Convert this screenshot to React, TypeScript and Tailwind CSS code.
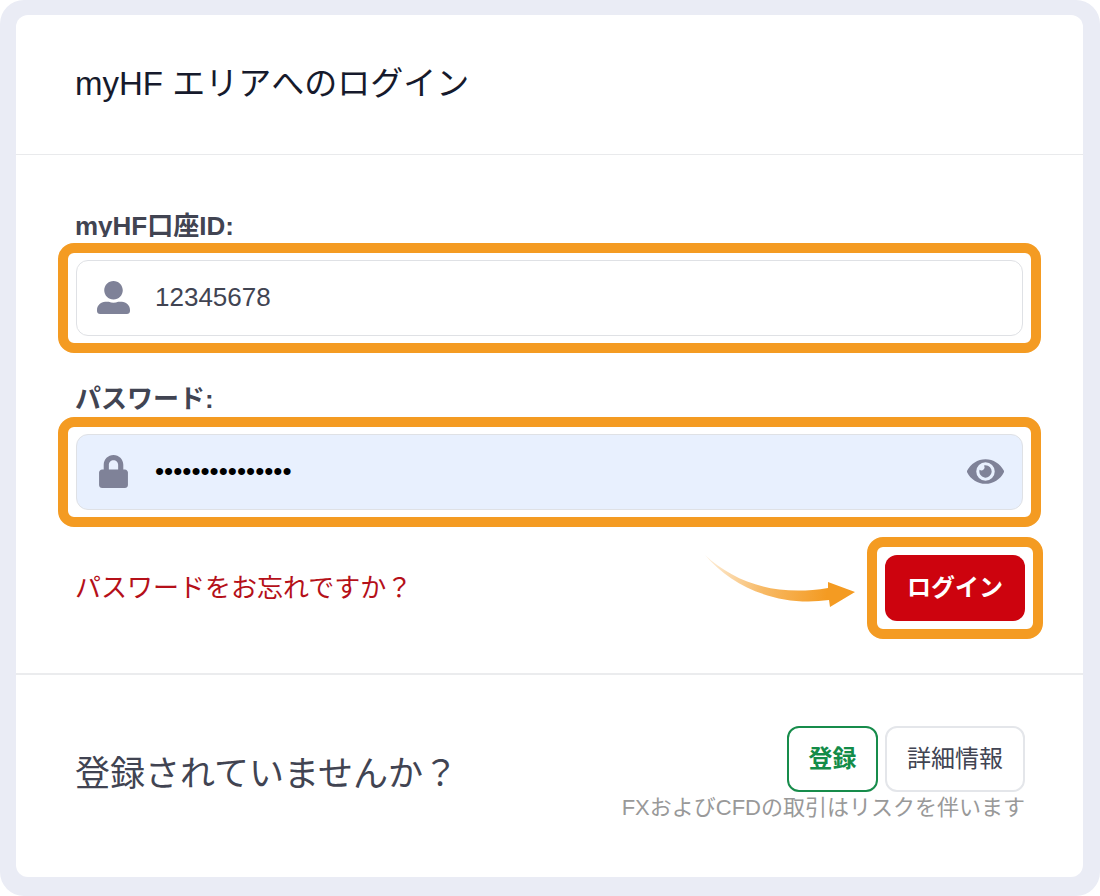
import { useState } from 'react';
import type { ReactNode } from 'react';
import { FaEye, FaLock, FaUserAlt } from 'react-icons/fa';

const fieldClass =
  'h-[76px] w-full rounded-xl border border-[#dfe1e5] pb-0.5 pl-[78px] text-[26px] outline-none';

function Highlight({ className = '', children }: { className?: string; children: ReactNode }) {
  return (
    <div className={`rounded-2xl border-[10px] border-[#f49b22] ${className}`}>{children}</div>
  );
}

function Arrow() {
  return (
    <svg
      className="mt-[18px] mr-3 h-[52px] w-[150px] shrink-0 self-start"
      viewBox="0 0 150 52"
      aria-hidden="true"
    >
      <defs>
        <linearGradient id="arrow-fade" gradientUnits="userSpaceOnUse" x1="0" y1="0" x2="125" y2="20">
          <stop offset="0" stopColor="#f49b22" stopOpacity="0.15" />
          <stop offset="0.5" stopColor="#f49b22" stopOpacity="0.7" />
          <stop offset="1" stopColor="#f49b22" />
        </linearGradient>
      </defs>
      <path
        d="M0 0C29 27 70 42 123 33L123 27L150 37L125 52L124 45C74 52 28 33 0 0Z"
        fill="url(#arrow-fade)"
      />
    </svg>
  );
}

export default function App() {
  const [accountId, setAccountId] = useState('12345678');
  const [password, setPassword] = useState('myhfpassword123');
  const [showPassword, setShowPassword] = useState(false);

  return (
    <div className="bg-white font-['Liberation_Sans','Noto_Sans_CJK_JP',sans-serif] text-[#414452]">
      <div className="flex min-h-screen flex-col rounded-3xl bg-[#eaecf5] pt-[15px] pr-[17px] pb-[19px] pl-4">
        <main className="flex grow flex-col rounded-xl bg-white">
          <header className="border-b border-[#e9eaec] px-[59px] pt-[45px] pb-[46px]">
            <h1 className="text-[33px] leading-[48px] text-[#161a2c]">myHF エリアへのログイン</h1>
          </header>

          <form
            className="flex flex-col px-[59px] pt-[55px] pb-[34px]"
            onSubmit={(e) => e.preventDefault()}
          >
            <label
              htmlFor="accountId"
              className="mb-1.5 h-[27px] overflow-hidden text-[26px] leading-[32px] font-bold"
            >
              myHF口座ID:
            </label>
            <Highlight className="-mx-[17px] px-2 py-[7px]">
              <div className="relative">
                <FaUserAlt className="absolute top-[21px] left-[21px] h-[33px] w-[33px] text-[#7f8298]" />
                <input
                  id="accountId"
                  type="text"
                  value={accountId}
                  onChange={(e) => setAccountId(e.target.value)}
                  className={`${fieldClass} bg-white pr-5`}
                />
              </div>
            </Highlight>

            <label htmlFor="password" className="mt-[30px] mb-0.5 text-[26px] leading-[32px] font-bold">
              パスワード:
            </label>
            <Highlight className="-mx-[17px] px-2 py-[7px]">
              <div className="relative">
                <FaLock className="absolute top-[21px] left-[21px] h-[33px] w-[33px] text-[#7f8298]" />
                <input
                  id="password"
                  type={showPassword ? 'text' : 'password'}
                  value={password}
                  onChange={(e) => setPassword(e.target.value)}
                  className={`${fieldClass} bg-[#e8f0fe] pr-[72px] text-black`}
                />
                <button
                  type="button"
                  aria-label="パスワードを表示"
                  onClick={() => setShowPassword(!showPassword)}
                  className="absolute top-[21px] right-[19px] text-[#7f8298]"
                >
                  <FaEye className="h-[33px] w-[37px]" />
                </button>
              </div>
            </Highlight>

            <div className="-mr-[19px] mt-2.5 flex items-center justify-between">
              <a href="#forgot" className="text-[26px] leading-[32px] text-[#b51019]">
                パスワードをお忘れですか？
              </a>
              <div className="flex items-center">
                <Arrow />
                <Highlight className="p-2">
                  <button
                    type="submit"
                    className="block h-[66px] w-[140px] rounded-xl bg-[#cd030e] text-2xl font-bold text-white"
                  >
                    ログイン
                  </button>
                </Highlight>
              </div>
            </div>
          </form>

          <footer className="flex grow items-start justify-between border-t-2 border-[#ebecee] pt-[51px] pr-[58px] pb-12 pl-[59px]">
            <h2 className="mt-[22px] text-[35px] leading-[52px]">登録されていませんか？</h2>
            <div className="flex flex-col items-end">
              <div className="flex gap-[7px]">
                <button
                  type="button"
                  className="h-[66px] w-[91px] rounded-xl border-2 border-[#178c4b] text-2xl font-bold text-[#138c48]"
                >
                  登録
                </button>
                <button
                  type="button"
                  className="h-[66px] w-[140px] rounded-xl border-2 border-[#e4e6ea] text-2xl"
                >
                  詳細情報
                </button>
              </div>
              <p className="text-[22px] leading-[32px] text-[#999999]">
                FXおよびCFDの取引はリスクを伴います
              </p>
            </div>
          </footer>
        </main>
      </div>
    </div>
  );
}
